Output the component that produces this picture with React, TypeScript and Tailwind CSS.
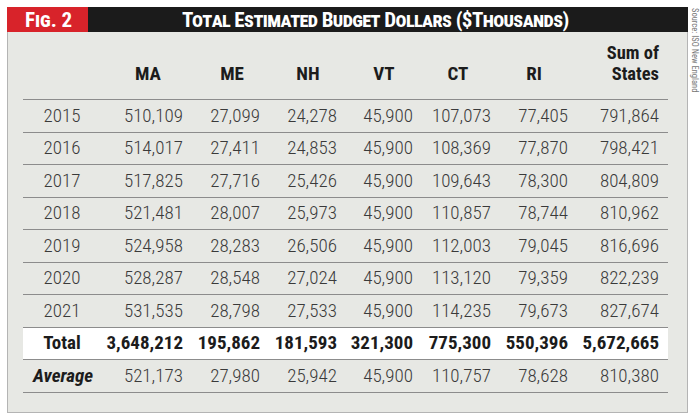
const rows: [string, string[]][] = [
  ["2015", ["510,109", "27,099", "24,278", "45,900", "107,073", "77,405", "791,864"]],
  ["2016", ["514,017", "27,411", "24,853", "45,900", "108,369", "77,870", "798,421"]],
  ["2017", ["517,825", "27,716", "25,426", "45,900", "109,643", "78,300", "804,809"]],
  ["2018", ["521,481", "28,007", "25,973", "45,900", "110,857", "78,744", "810,962"]],
  ["2019", ["524,958", "28,283", "26,506", "45,900", "112,003", "79,045", "816,696"]],
  ["2020", ["528,287", "28,548", "27,024", "45,900", "113,120", "79,359", "822,239"]],
  ["2021", ["531,535", "28,798", "27,533", "45,900", "114,235", "79,673", "827,674"]],
];
const total = ["3,648,212", "195,862", "181,593", "321,300", "775,300", "550,396", "5,672,665"];
const avg = ["521,173", "27,980", "25,942", "45,900", "110,757", "78,628", "810,380"];

const widths = ["w-[82px]", "w-[77px]", "w-[77px]", "w-[76px]", "w-[78px]", "w-[77px]", "w-[91px]"];
const headPad = ["pl-[12px]", "pl-[21px]", "pl-[19px]", "pl-[18px]", "pl-[12px]", "pl-[9px]"];
const heads = ["MA", "ME", "NH", "VT", "CT", "RI"];

function Row({ label, vals, kind }: { label: string; vals: string[]; kind: "n" | "t" | "a" }) {
  const bg = kind === "t" ? "bg-white" : "";
  const valCls =
    kind === "t" ? "font-bold text-[#1c1c1c]" : "font-light text-[#3a3a3a]";
  return (
    <div className={`flex h-[32.5px] items-center border-b border-[#8c8c8c] ${bg}`}>
      {kind === "a" ? (
        <div className="w-[78px] pl-[10px] font-bold italic text-[#1c1c1c]">{label}</div>
      ) : (
        <div className={`w-[78px] text-center ${kind === "t" ? "font-bold text-[#1c1c1c]" : "font-light text-[#3a3a3a]"}`}>
          {label}
        </div>
      )}
      {vals.map((v, i) => (
        <div key={i} className={`${widths[i]} text-right ${valCls}`}>
          {v}
        </div>
      ))}
    </div>
  );
}

export default function App() {
  return (
    <div className="w-[700px] h-[415px] bg-white flex items-start pt-[7px] pl-[7px] font-['Roboto_Condensed',sans-serif]">
      <div className="w-[681px] flex flex-col">
        <div className="flex h-[25px] [font-variant-caps:small-caps] font-bold text-white text-[21px] leading-none">
          <div className="w-[81px] bg-[#d8232a] flex items-center pl-[18px] pt-[1px]">Fig. 2</div>
          <div className="flex-1 bg-[#1b1b1b] flex items-center pl-[94px] pt-[1px] tracking-[-0.6px]">
            Total Estimated Budget Dollars ($Thousands)
          </div>
        </div>
        <div className="h-[381px] bg-[#e7e8e4] border-l border-r border-b border-[#b4b4b4] px-[15px]">
          <div className="w-[645px]">
            <div className="flex h-[68px] items-end pb-[15px] border-b border-[#8c8c8c] font-bold text-[19px] leading-[20px] text-[#1c1c1c]">
              <div className="w-[78px]" />
              {heads.map((h, i) => (
                <div key={h} className={`${widths[i]} ${headPad[i]} text-center`}>
                  {h}
                </div>
              ))}
              <div className={`${widths[6]} text-right text-[18.5px] leading-[21px] -mb-[1px]`}>
                <div>Sum of</div>
                <div>States</div>
              </div>
            </div>
            <div className="text-[19px]">
              {rows.map(([y, v]) => (
                <Row key={y} label={y} vals={v} kind="n" />
              ))}
              <Row label="Total" vals={total} kind="t" />
              <Row label="Average" vals={avg} kind="a" />
            </div>
          </div>
        </div>
      </div>
      <div className="ml-[2px] [writing-mode:vertical-rl] text-[8.5px] leading-[9px] text-[#777] font-['Roboto_Condensed',sans-serif] pt-[1px]">
        Source: ISO New England
      </div>
    </div>
  );
}
